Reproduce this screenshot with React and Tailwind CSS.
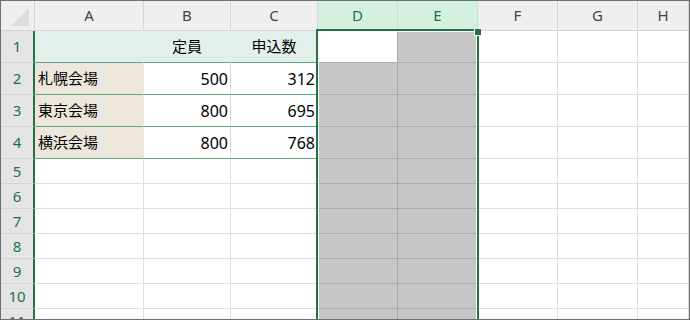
import React from 'react';

const cols = [
  { key: 'A', w: 'w-[109px]' },
  { key: 'B', w: 'w-[87px]' },
  { key: 'C', w: 'w-[87px]' },
  { key: 'D', w: 'w-[80px]', sel: true },
  { key: 'E', w: 'w-[80px]', sel: true },
  { key: 'F', w: 'w-[80px]' },
  { key: 'G', w: 'w-[80px]' },
  { key: 'H', w: 'flex-1' },
];

const data = [
  ['', '定員', '申込数'],
  ['札幌会場', '500', '312'],
  ['東京会場', '800', '695'],
  ['横浜会場', '800', '768'],
];

const font = { fontFamily: '"Noto Sans", "Noto Sans CJK JP", sans-serif' };

const Cell = ({ r, c, col }) => {
  const inTable = r < 4 && c < 3;
  let cls = 'h-full border-r border-b shrink-0 flex items-center text-[15px] text-black ';
  cls += col.w + ' ';
  if (col.sel) {
    cls += r === 0 && c === 3 ? 'bg-white border-[#ababab] ' : 'bg-[#c6c6c6] border-[#ababab] ';
  } else if (inTable) {
    if (r === 0) cls += 'bg-[#e2efea] border-r-[#e2efea] border-b-[#5ea580] justify-center ';
    else if (c === 0) cls += 'bg-[#ede6dc] border-r-[#ede6dc] border-b-[#5ea580] pl-[3px] ';
    else cls += 'bg-white border-r-[#dadada] border-b-[#5ea580] justify-end pr-[2px] text-[16px] ';
  } else {
    cls += 'bg-white border-[#dedede] ';
  }
  const text = inTable ? data[r][c] : '';
  return <div className={cls}>{text}</div>;
};

export default function App() {
  const rows = Array.from({ length: 11 }, (_, i) => i);
  return (
    <div className="relative w-[690px] h-[320px] overflow-hidden border border-[#6e6e6e] bg-white" style={font}>
      <div className="flex h-[30px]">
        <div className="relative w-[34px] shrink-0 h-full bg-[#efefef] border-r border-b border-[#d6d6d6]">
          <div className="absolute right-[5px] bottom-[4px] w-0 h-0 border-l-[18px] border-l-transparent border-b-[18px] border-b-[#dcdcdc]" />
        </div>
        {cols.map((col) => (
          <div
            key={col.key}
            className={
              col.w +
              ' shrink-0 h-full flex items-center justify-center border-r border-b text-[15px] ' +
              (col.sel
                ? 'bg-[#d3f0e0] text-[#217346] border-r-[#c4e3d2] border-b-[#217346]'
                : 'bg-[#efefef] text-[#444] border-[#d6d6d6]')
            }
          >
            {col.key}
          </div>
        ))}
      </div>
      {rows.map((r) => (
        <div key={r} className={'flex ' + (r < 4 ? 'h-[32px]' : 'h-[25px]')}>
          <div className="w-[34px] shrink-0 h-full bg-[#e4e4e4] border-b border-b-[#d2d2d2] border-r-2 border-r-[#217346] flex items-center justify-center text-[15px] text-[#217346]">
            {r + 1}
          </div>
          {cols.map((col, c) => (
            <Cell key={col.key} r={r} c={c} col={col} />
          ))}
        </div>
      ))}
      <div className="absolute left-[315px] top-[28px] w-[163px] h-[300px] border-2 border-[#217346] shadow-[inset_0_0_0_1px_white]" />
      <div className="absolute left-[473px] top-[28px] w-[7px] h-[7px] bg-[#217346] border-l border-b border-white" />
    </div>
  );
}
